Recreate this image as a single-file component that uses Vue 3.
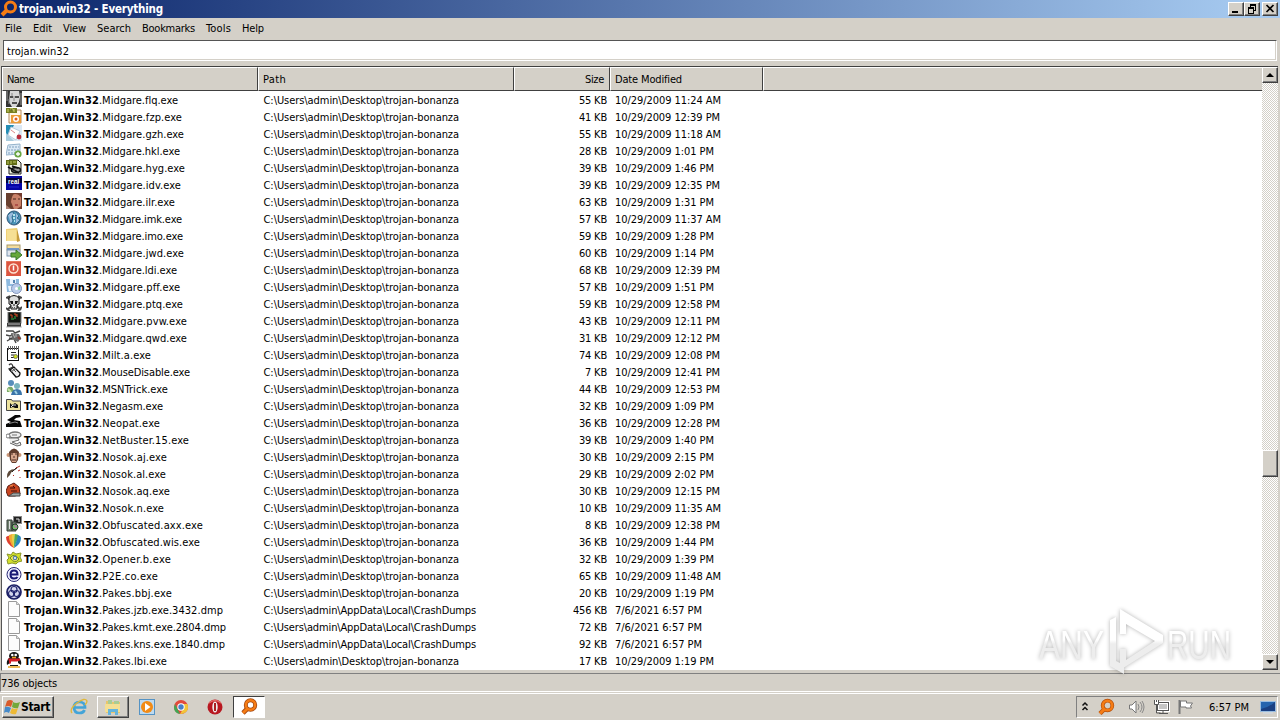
<script setup>
// Tightens or loosens the tracking so a label takes exactly the given width.
const vFit = {
  mounted(el, { value }) {
    const w = el.getBoundingClientRect().width
    el.style.letterSpacing = (value - w) / el.textContent.length + 'px'
  }
}

const menu = [['File', 17, 11], ['Edit', 19, 11], ['View', 23, 11], ['Search', 34, 11], ['Bookmarks', 53, 11], ['Tools', 25, 11], ['Help', 22, 0]]

const page = '<path d="M2.5 .5h8l3 3v12h-11z" fill="#fcfcfc" stroke="#999"/><path d="M10.5 .5v3h3" fill="#ddd" stroke="#aaa"/>'
const icons = {
  face: '<rect width="16" height="16" fill="#343434"/><path d="M4 0h9l1 6-1 5-3 5H6L3 11z" fill="#d7d7d7"/><path d="M4 6h3M9 6h4M6 12h5" stroke="#222" stroke-width="1.5"/><path d="M8 5v5M6 2v3M3 8v5" stroke="#888"/><path d="M1 0v10M15 2v12" stroke="#999"/>',
  jpg: '<path d="M3 2h12v13H3z" fill="#fff7e9" stroke="#b4895b"/><rect x="5" y="7" width="10" height="8" fill="#ed9b37"/><circle cx="10" cy="11" r="3" fill="#fff"/><circle cx="10" cy="11" r="1.5" fill="#dd5b20"/><rect width="11" height="5" fill="#777f22"/><path d="M2 1v3M4 1h3v2M8 1v3" stroke="#d3d86a"/>',
  cards: '<rect width="16" height="16" fill="#dbe9f5"/><path d="M0 0h8L3 10H0z" fill="#258eb5"/><path d="M0 8l8 8H0z" fill="#acd"/><path d="M5 2l9 4-4 9L2 10z" fill="#fff" stroke="#bcd"/><circle cx="13" cy="12" r="2.4" fill="#b92d3c"/><path d="M5 5l4 3" stroke="#d88"/>',
  kbd: '<path d="M2 3l12-1v10L0 13z" fill="#dbe9f5" stroke="#94b2cb"/><path d="M3 5h10M2 8h11M2 11h9" stroke="#9db8d0" stroke-width="1.4" stroke-dasharray="2 1"/><circle cx="12" cy="12" r="3.6" fill="#69a643"/><path d="M12 10v4M10 12h4" stroke="#fff" stroke-width="1.3"/>',
  doc: '<path d="M3 1h9l3 3v11H3z" fill="#eef0df" stroke="#222"/><rect y="1" width="11" height="5" fill="#606b14"/><path d="M2 2v3M5 2v3M7 3h3" stroke="#c3cc68"/><ellipse cx="10" cy="11" rx="4.5" ry="2.5" fill="#999" stroke="#111" stroke-width="1.5"/><path d="M2 8l11 6M6 7l6 2" stroke="#111" stroke-width="1.5"/>',
  real: '<rect width="16" height="14" fill="#0505a5"/><path d="M0 2h16v5H0z" fill="#020238"/><text x="2" y="7.6" font-family="Liberation Sans" font-size="6.3" font-weight="bold" fill="#fff">real</text><path d="M3 11h10" stroke="#2222d0"/>',
  girl: '<rect width="16" height="16" fill="#733c2d"/><path d="M6 2q5-3 9 2v9l-4 3H8L5 9z" fill="#c98269"/><path d="M0 0h8L4 8l2 8H0z" fill="#69402f"/><path d="M7 6h3M12 6h2" stroke="#492820"/><path d="M9 12h3" stroke="#a33c3c" stroke-width="1.4"/><path d="M0 12l5 4H0z" fill="#ad8274"/>',
  globe: '<circle cx="8" cy="8" r="7" fill="#4a94b9" stroke="#355577"/><path d="M2 5q4-5 6-2l-2 4 1 4-2 3M10 2l3 4-2 2 3 2-4 4" fill="#9bd" stroke="#2f6d8c"/><path d="M7 5h2M7 8h2M8 11h1" stroke="#dff" stroke-width="1.5"/>',
  folder: '<path d="M0 2l11-1v13H0z" fill="#f1d177"/><path d="M11 1l3 13-3 1z" fill="#c59c3e"/><path d="M1 3h9v11H1z" fill="#f6df94"/>',
  move: '<rect x="1" y="1" width="13" height="5" fill="#f3dc9c" stroke="#a89868"/><rect x="1" y="6" width="13" height="6" fill="#e1e6ee" stroke="#7d95b0"/><path d="M1 5h12" stroke="#7397c4" stroke-width="2"/><path d="M5 9h5V6l6 5-6 5v-3H5z" fill="#66a83b" stroke="#37762a"/>',
  power: '<rect width="15" height="15" fill="#dc5541"/><path d="M0 14V0h15" fill="none" stroke="#ee9b7a"/><circle cx="7.5" cy="7.5" r="4.5" fill="none" stroke="#ffe4d2" stroke-width="1.4"/><path d="M7.5 4.5v5" stroke="#fff" stroke-width="1.5"/>',
  save: '<path d="M0 1h13v12l-12 1z" fill="#8ebadf"/><path d="M4 1h6v5H4zM2 8h8v5H3z" fill="#eaf3fd"/><path d="M8 2v3" stroke="#5383b0" stroke-width="2"/><circle cx="10.5" cy="10.5" r="5" fill="#b8cae9" stroke="#8193bb"/><path d="M10 11l4-3v4z" fill="#8bd0a0"/><circle cx="10.5" cy="10.5" r="1.5" fill="#fff"/>',
  skull: '<path d="M1 2l14 13M15 2L1 15M0 3l4-2M12 1l4 2M0 13l4 3M12 16l4-4" stroke="#444" stroke-width="1.8"/><path d="M3 3q5-5 10 0v6l-2 1v4H5v-4L3 9z" fill="#ddd" stroke="#111"/><path d="M4 6h3v3H5zM9 6h3l-1 3H9zM7.500 9h1v2h-1z" fill="#111"/><path d="M6 12.500h4" stroke="#555" stroke-dasharray="1 1"/>',
  pc: '<rect x="2" width="13" height="11" fill="#101510" stroke="#777"/><path d="M4 3h2v3M8 2h2v2M11 5V2" stroke="#d44e25" fill="none"/><path d="M5 7h3M9 4v3" stroke="#35b54c"/><path d="M1 11h14v4H1z" fill="#393939"/><path d="M2 12h12M0 15h16" stroke="#bbb"/>',
  bug: '<path d="M0 2h7l2 2 5-2M0 6l4 1 3-2M1 12l5-3M8 10l2 4M11 8l4 2M3 9l4 1" stroke="#444" fill="none" stroke-width="1.4"/><path d="M5 4l8 1 2 4-3 4-6-3z" fill="#666"/><path d="M7 5l2 4M10 5v3" stroke="#bbb"/><path d="M12 8l2 2" stroke="#873b33" stroke-width="2"/>',
  pad: '<rect x="1.500" y="2.500" width="11" height="12" fill="#fff" stroke="#111"/><path d="M2.500 0v4M4.500 0v4M6.500 0v4M8.500 0v4M10.500 0v4M12.500 0v4" stroke="#666"/><path d="M5 6.500h5M5 9h3M5 11.500h3" stroke="#222" stroke-width="1.2"/><circle cx="9.500" cy="10.500" r="2" fill="#d0e11b" stroke="#776"/>',
  mouse: '<path d="M3 2q3-3 4 2l-4 2 3 3" fill="none" stroke="#333" stroke-width="1.3"/><path d="M4 7l4-3 6 6q0 4-4 4z" fill="#eee" stroke="#111" stroke-width="1.3"/><path d="M5 9l5-4M7 6l3 3" stroke="#555"/>',
  msn: '<circle cx="5" cy="3" r="3" fill="#588ebb"/><path d="M1 12q-1-6 5-5l3 5z" fill="#78a867"/><circle cx="11" cy="6" r="3" fill="#79b4bd"/><path d="M5 15q1-6 6-6t5 6z" fill="#3b75aa"/><path d="M2 9l3 3" stroke="#cbe4a9" stroke-width="2"/><path d="M9 11l2 3" stroke="#9ed0e3" stroke-width="2"/>',
  fold2: '<path d="M.5 2.500h5l1 1.500h8v9.500H.5z" fill="#eee39d" stroke="#444"/><path d="M4 6l2 2 3-2 3 2v3H9l-2-1-3 1z" fill="#111"/><path d="M7 8h3M5 10l2-2" stroke="#eee"/>',
  spy: '<path d="M1 6l5-3 3-2h5l1 2-5 1-2 2 6 1 2 6H0v-3l5-2z" fill="#080808"/><path d="M3 9.500l6-1.500 3 1" stroke="#bbb" fill="none" stroke-width=".7"/>',
  robot: '<ellipse cx="9" cy="4" rx="6" ry="3" fill="#eee" stroke="#777" stroke-width="1.3"/><circle cx="2" cy="5" r="2" fill="#fff" stroke="#777"/><path d="M3 7h9l1 2-7 2 5 2 3-2 1 3-4 1-7-3" fill="#eee" stroke="#666"/><path d="M6 4h5" stroke="#777"/>',
  monkey: '<circle cx="2.5" cy="7" r="2" fill="#c99678"/><circle cx="13.5" cy="7" r="2" fill="#c99678"/><path d="M3 4q5-7 10 0l-1 8-2 3H6l-2-3z" fill="#603c2c"/><path d="M5 5h6v5l-1 4H6l-1-4z" fill="#d8a68c"/><path d="M5 6h2M9 6h2M7 9h2M6 12h4" stroke="#4a2a22"/>',
  swirl: '<path d="M1 13q-1-9 9-9-5 2-6 6z" fill="#5c4939"/><path d="M6 7l5-5M8 5l3-2" stroke="#312924"/><path d="M10 3l4-2M12 6l2-1M7 11l1-1M14 12v1" stroke="#b52c26"/>',
  red: '<path d="M2 4l6-3 5 4 1 7-5 2H2l-2-5z" fill="#c84520" stroke="#5f2015"/><path d="M4 6h5M5 9h6M7 4l2 2" stroke="#41100b"/><path d="M7 11h7v3H3z" fill="#9da8a8" stroke="#444"/><path d="M4 4l3-1" stroke="#ef8f48"/>',
  none: '',
  setup: '<rect x="7.500" y=".5" width="8" height="7" fill="#222" stroke="#888"/><path d="M10 3h3v3" stroke="#ddd" fill="none"/><path d="M1 4h5v11H1zM6 6h4v9H6z" fill="#738371" stroke="#363f39"/><circle cx="9" cy="11" r="3" fill="#73ba69" stroke="#26352d"/><path d="M11 8l4 2v4M3.500 5v8" stroke="#ddd" fill="none"/><path d="M8 10h2v2" stroke="#d252c4" fill="none"/>',
  leaf: '<path d="M8 15Q0 11 0 4q3-2 4-1z" fill="#df4030"/><path d="M8 15Q2 8 3 2l3-1z" fill="#f3a733"/><path d="M8 15Q5 6 6 1l3 0z" fill="#e7ce47"/><path d="M8 15Q8 5 9 1q3 0 4 2z" fill="#4eaa59"/><path d="M8 15Q11 7 12 2q3 1 3 3 0 6-7 10" fill="#2884bf"/>',
  opener: '<path d="M1 4l4 1 2-3 3 2 5-1-1 4 2 4-4 1-2 2-4-1-4 1-1-4 2-2z" fill="#d4e02b" stroke="#8b962b"/><path d="M4 8q4-6 9 1-4 6-9-1z" fill="#ede653" stroke="#6f8a26"/><circle cx="9" cy="8" r="2.2" fill="#547eaa"/><circle cx="9" cy="8" r="1" fill="#fff"/>',
  ee: '<circle cx="8" cy="7.500" r="7" fill="#eef" stroke="#272774" stroke-width="1"/><path d="M4.500 7.500h7q0-4-3.500-4t-3.500 4 3.500 4q2.500 0 3.500-1.500" fill="none" stroke="#171774" stroke-width="2"/>',
  knot: '<circle cx="8" cy="8" r="7" fill="#d4d7ee" stroke="#1c2065" stroke-width="1.7"/><circle cx="8" cy="5.500" r="3" fill="none" stroke="#20246d" stroke-width="1.2"/><circle cx="5.500" cy="9.500" r="3" fill="none" stroke="#20246d" stroke-width="1.2"/><circle cx="10.500" cy="9.500" r="3" fill="none" stroke="#20246d" stroke-width="1.2"/>',
  page,
  qq: '<ellipse cx="8" cy="4" rx="5" ry="4" fill="#161616"/><path d="M3 6Q0 9 1 13l3-2v3h8v-3l3 2q1-4-2-7z" fill="#171717"/><path d="M4 7h8v6H4z" fill="#fff"/><path d="M2 6.500h12v2l-3 1H5v2H3V9z" fill="#d21b25"/><circle cx="6.300" cy="3" r="1.300" fill="#fff"/><circle cx="9.700" cy="3" r="1.300" fill="#fff"/><path d="M6 5.500h4M2 15h12" stroke="#e9a520" stroke-width="1.300"/>'
}

// suffix, right edge, size, date, icon
const rows = [
  ['Midgare.flq.exe', 178, 55, '11:24 AM', 'face'], ['Midgare.fzp.exe', 182, 41, '12:39 PM', 'jpg'],
  ['Midgare.gzh.exe', 184, 55, '11:18 AM', 'cards'], ['Midgare.hkl.exe', 180, 28, '1:01 PM', 'kbd'],
  ['Midgare.hyg.exe', 185, 39, '1:46 PM', 'doc'], ['Midgare.idv.exe', 181, 39, '12:35 PM', 'real'],
  ['Midgare.ilr.exe', 175, 63, '1:31 PM', 'girl'], ['Midgare.imk.exe', 182, 57, '11:37 AM', 'globe'],
  ['Midgare.imo.exe', 183, 59, '1:28 PM', 'folder'], ['Midgare.jwd.exe', 184, 60, '1:14 PM', 'move'],
  ['Midgare.ldi.exe', 177, 68, '12:39 PM', 'power'], ['Midgare.pff.exe', 181, 57, '1:51 PM', 'save'],
  ['Midgare.ptq.exe', 183, 59, '12:58 PM', 'skull'], ['Midgare.pvw.exe', 187, 43, '12:11 PM', 'pc'],
  ['Midgare.qwd.exe', 187, 31, '12:12 PM', 'bug'], ['Milt.a.exe', 151, 74, '12:08 PM', 'pad'],
  ['MouseDisable.exe', 190, 7, '12:41 PM', 'mouse'], ['MSNTrick.exe', 168, 44, '12:53 PM', 'msn'],
  ['Negasm.exe', 163, 32, '1:09 PM', 'fold2'], ['Neopat.exe', 160, 36, '12:28 PM', 'spy'],
  ['NetBuster.15.exe', 189, 39, '1:40 PM', 'robot'], ['Nosok.aj.exe', 167, 30, '2:15 PM', 'monkey'],
  ['Nosok.al.exe', 166, 29, '2:02 PM', 'swirl'], ['Nosok.aq.exe', 170, 30, '12:15 PM', 'red'],
  ['Nosok.n.exe', 164, 10, '11:35 AM', 'none'], ['Obfuscated.axx.exe', 203, 8, '12:38 PM', 'setup'],
  ['Obfuscated.wis.exe', 200, 36, '1:44 PM', 'leaf'], ['Opener.b.exe', 171, 32, '1:39 PM', 'opener'],
  ['P2E.co.exe', 158, 65, '11:48 AM', 'ee'], ['Pakes.bbj.exe', 172, 20, '1:19 PM', 'knot'],
  ['Pakes.jzb.exe.3432.dmp', 223, 456, '', 'page'], ['Pakes.kmt.exe.2804.dmp', 226, 72, '', 'page'],
  ['Pakes.kns.exe.1840.dmp', 225, 92, '', 'page'], ['Pakes.lbi.exe', 167, 17, '1:19 PM', 'qq']
].map(([name, end, kb, time, icon]) => ({
  name: '.' + name, nameW: end - 99, size: kb + ' KB', sizeW: kb > 99 ? 34 : kb > 9 ? 28 : 22,
  path: time ? 'C:\\Users\\admin\\Desktop\\trojan-bonanza' : 'C:\\Users\\admin\\AppData\\Local\\CrashDumps',
  pathW: time ? 195.5 : 212.5,
  date: time ? '10/29/2009 ' + time : '7/6/2021 6:57 PM',
  dateW: !time ? 87 : time.length < 8 ? 99 : time.endsWith('AM') ? 106 : 105, icon
}))
</script>

<template>
  <div class="screen">
    <header class="title">
      <svg class="logo" width="18" height="18" viewBox="0 0 18 18"><circle cx="10.5" cy="7" r="5" fill="none" stroke="#f57c14" stroke-width="3" /><path d="M7 10l-5 5" stroke="#f57c14" stroke-width="4" /></svg>
      <b v-fit="144">trojan.win32 - Everything</b>
      <div class="wbtns">
        <i class="btn"><svg width="14" height="12"><path d="M3 9h6" stroke="#000" stroke-width="2" /></svg></i>
        <i class="btn"><svg width="14" height="12" shape-rendering="crispEdges"><path d="M5 1h6v2H5zM3 4h6v2H3z" /><path d="M5.5 2v2M10.5 2v5.500H9M3.500 5v5h5V5" fill="none" stroke="#000" /></svg></i>
        <i class="btn close"><svg width="14" height="12"><path d="M3.500 2l7 7M10.500 2l-7 7" stroke="#000" stroke-width="1.7" /></svg></i>
      </div>
    </header>
    <nav class="menu"><span v-for="m in menu" :key="m[0]" :style="{ marginRight: m[2] + 'px', width: m[1] + 'px' }"><span v-fit="m[1]">{{ m[0] }}</span></span></nav>
    <div class="search"><span v-fit="62">trojan.win32</span></div>
    <main class="list">
      <div class="content">
        <div class="head">
          <div class="h c1"><span v-fit="27">Name</span></div>
          <div class="h c2"><span v-fit="23">Path</span></div>
          <div class="h c3"><span v-fit="19">Size</span></div>
          <div class="h c4"><span v-fit="67">Date Modified</span></div>
          <div class="h c5"></div>
        </div>
        <div class="rows">
          <div v-for="r in rows" :key="r.name" class="row">
            <div class="name"><svg width="16" height="16" viewBox="0 0 16 16" v-html="icons[r.icon]"></svg><b v-fit="75">Trojan.Win32</b><span v-fit="r.nameW">{{ r.name }}</span></div>
            <div class="path"><span v-fit="r.pathW">{{ r.path }}</span></div>
            <div class="size"><span v-fit="r.sizeW">{{ r.size }}</span></div>
            <div class="date"><span v-fit="r.dateW">{{ r.date }}</span></div>
          </div>
        </div>
      </div>
      <div class="scroll">
        <i class="btn sb"><svg width="12" height="12"><path d="M2 8h8L6 4z" /></svg></i>
        <i class="btn thumb"></i>
        <i class="btn sb"><svg width="12" height="12"><path d="M2 4h8L6 8z" /></svg></i>
      </div>
    </main>
    <div class="status"><span v-fit="56">736 objects</span></div>
    <footer class="task">
      <div class="btn start">
        <svg width="17" height="16" viewBox="0 0 17 16"><path d="M3 2q3-2 6 0L7 8Q4 6 1 8z" fill="#d95b2b" /><path d="M9 3q3 2 7 0l-2 6q-3 1-6-1z" fill="#73a83b" /><path d="M1 8q3-1 6 1l-2 5q-3-2-5 0z" fill="#468ac9" /><path d="M8 9q3 2 6 0l-2 6q-3 1-6-1z" fill="#edb935" /></svg>
        <b v-fit="29">Start</b>
      </div>
      <div class="tb"><svg width="18" height="18" viewBox="0 0 18 18"><path d="M4 9.500h11Q15 4 9.500 4T4 9.500 9.500 15q4 0 5-3" fill="none" stroke="#43a4d8" stroke-width="2.700" /><path d="M2 15Q-1 11 7 5t10-2q0 2-2 4" fill="none" stroke="#e0b83c" stroke-width="1.400" /></svg></div>
      <div class="tb btn"><svg width="18" height="18" viewBox="0 0 18 18"><path d="M2 3h5l1 1h8v11H2z" fill="#e8c66b" /><path d="M4 2h4v5H4zM10 3h5v4h-5z" fill="#a9cc94" /><path d="M1 6h15v8H1z" fill="#f4df94" /><path d="M4 17v-6h10v6h-3v-3H7v3z" fill="#65b4dc" /></svg></div>
      <div class="tb"><svg width="18" height="18" viewBox="0 0 18 18"><rect x="1.500" y="1.500" width="15" height="15" fill="#bedaf0" stroke="#5593c4" /><circle cx="9" cy="9" r="6" fill="#f28b16" /><path d="M7 5l5.500 4L7 13z" fill="#fff" /></svg></div>
      <div class="tb"><svg width="18" height="18" viewBox="0 0 18 18"><circle cx="9" cy="9" r="7" fill="#e14a3b" /><path d="M3 6l5 10Q2 15 2 9z" fill="#42a554" /><path d="M9 6h6.500Q18 15 8 16l3-5z" fill="#f2c539" /><circle cx="9" cy="9" r="3.700" fill="#fff" /><circle cx="9" cy="9" r="2.700" fill="#477fc8" /></svg></div>
      <div class="tb"><svg width="18" height="18" viewBox="0 0 18 18"><ellipse cx="9" cy="9" rx="7.500" ry="7.500" fill="#b81821" /><path d="M3 5q6-5 12 0" fill="none" stroke="#e56c68" stroke-width="1.500" /><ellipse cx="9" cy="9" rx="2.700" ry="5.500" fill="#eee" /><path d="M9 5v8" stroke="#a22" stroke-width="2" /></svg></div>
      <div class="tb active"><svg width="18" height="18" viewBox="0 0 18 18"><path d="M8 10l-5 5" stroke="#a54912" stroke-width="4.600" /><circle cx="10.500" cy="7" r="4.700" fill="#fff" stroke="#a54912" stroke-width="4" /><circle cx="10.500" cy="7" r="4.700" fill="none" stroke="#f57c14" stroke-width="2.400" /><path d="M8 10l-5 5" stroke="#f57c14" stroke-width="2.800" /></svg></div>
      <div class="tray">
        <svg class="t1" width="8" height="12"><path d="M1.500 4.500l2.500-2.500 2.500 2.500M1.500 9l2.500-2.500 2.500 2.500" fill="none" stroke="#111" stroke-width="1.500" /></svg>
        <svg class="t2" width="18" height="18" viewBox="0 0 18 18"><circle cx="10.500" cy="7.500" r="4.800" fill="none" stroke="#b5500c" stroke-width="3.800" /><path d="M8 10.500l-5 5" stroke="#b5500c" stroke-width="4.500" /><circle cx="10.500" cy="7.500" r="4.800" fill="none" stroke="#f57c14" stroke-width="2.400" /><path d="M8 10.500l-5 5" stroke="#f57c14" stroke-width="3" /></svg>
        <svg class="t3" width="18" height="16"><path d="M1.500 6h2.500l4-4v12l-4-4H1.500z" fill="#fff" stroke="#777" /><path d="M10 5q2 3 0 6M12 3q4 5 0 10M14 2q4 6 0 12" fill="none" stroke="#888" /></svg>
        <svg class="t4" width="17" height="16"><rect x="4.500" y="3.500" width="11" height="8" fill="#c5c5c5" stroke="#fff" stroke-width="3" /><rect x="4.500" y="3.500" width="11" height="8" fill="none" stroke="#555" /><path d="M6 14.500h9M10 12v2M3.500 6v8h4" fill="none" stroke="#555" /><path d="M1.500 1v4.500h4V1M3.500 1v2" fill="#fff" stroke="#555" /></svg>
        <svg class="t5" width="17" height="16"><path d="M2.500 1v14" stroke="#777" stroke-width="2" /><path d="M3.500 2h6v2h6l-2 3 1 2H9V8H3.500z" fill="#fff" stroke="#777" /></svg>
        <span v-fit="40" class="clock">6:57 PM</span>
        <svg class="t6" width="16" height="14"><rect x=".5" y="1.500" width="15" height="10" fill="#2564ae" stroke="#9abde0" /><path d="M1 9q7-1 14-7v9H1z" fill="#1a4082" /><path d="M3 13h10" stroke="#cfdcea" /></svg>
      </div>
    </footer>
    <svg class="mark" width="216" height="80" viewBox="0 0 216 80">
      <defs>
        <linearGradient id="fade" gradientUnits="userSpaceOnUse" x1="0" y1="34" x2="0" y2="38"><stop offset="0" stop-color="#fff" /><stop offset="1" stop-color="#ededed" /></linearGradient>
      </defs>
      <g class="glow" fill="url(#fade)">
        <text x="5" y="53" textLength="65" lengthAdjust="spacingAndGlyphs">ANY</text>
        <text x="133" y="53" textLength="64" lengthAdjust="spacingAndGlyphs">RUN</text>
        <path d="M76 14l6-3v44l8 4v9l-14-8z" />
        <path fill-rule="evenodd" d="M86 3l43 26v8L86 64V43h6v11l29-19-29-17v10h-6z" />
      </g>
    </svg>
  </div>
</template>

<style>
body { background: #d4d0c8; overflow: hidden; }
</style>
<style scoped>
.screen { position: relative; width: 1280px; height: 720px; display: flex; flex-direction: column; background: #d4d0c8; color: #000; font-family: "DejaVu Sans Condensed", "DejaVu Sans", sans-serif; font-stretch: condensed; font-size: 11px; line-height: 17px; white-space: pre; overflow: hidden; }
svg { display: block; flex: none; }
span, b { display: inline-block; flex: none; }
.title { height: 18px; display: flex; align-items: center; background: linear-gradient(90deg, #0a246a, #a6caf0 98%); color: #fff; font-size: 11.500px; }
.logo { margin-right: 1px; }
.wbtns { display: flex; margin: 0 2px 0 auto; }
.btn { display: block; box-sizing: border-box; background: #d4d0c8; border: 1px solid; border-color: #fff #404040 #404040 #fff; box-shadow: inset -1px -1px #808080; }
.wbtns .btn { width: 16px; height: 14px; }
.wbtns .close { margin-left: 2px; }
.menu { display: flex; height: 22px; align-items: center; padding-left: 5px; box-sizing: border-box; padding-bottom: 2px; }
.search { height: 21px; margin: 0 3px; box-sizing: border-box; background: #fff; border: 1px solid; border-color: #555 #fff #fff #555; box-shadow: inset 0 -1px #d4d0c8, inset -1px 0 #d4d0c8; padding: 2px 3px 0; }
.list { margin: 5px 2px 0 1px; height: 605px; box-sizing: border-box; display: flex; border-top: 1px solid #404040; border-left: 1px solid #555; border-bottom: 1px solid #d4d0c8; background: #fff; }
.content { flex: 1; overflow: hidden; }
.head { display: flex; height: 24px; }
.h { box-sizing: border-box; height: 24px; padding: 3px 5px 0; background: #d4d0c8; border: 1px solid; border-color: #fff #404040 #404040 #fff; border-left-color: #fff; }
.c1 { width: 256px; padding-left: 4px; }
.c2 { width: 256px; padding-left: 4px; }
.c3 { width: 96px; text-align: right; }
.c4 { width: 153px; padding-left: 4px; }
.c5 { flex: 1; border-right: 0; }
.row { display: flex; height: 17px; }
.row span, .row b { padding-top: 1px; height: 16px; }
.name { width: 257px; box-sizing: border-box; display: flex; padding-left: 4px; }
.name svg { margin-right: 2px; }
.path { width: 256px; box-sizing: border-box; padding-left: 4.500px; }
.size { width: 92px; text-align: right; }
.date { padding-left: 8px; }
.scroll { width: 16px; display: flex; flex-direction: column; background: repeating-conic-gradient(#d4d0c8 0 25%, #fff 0 50%) 0 0 / 2px 2px; }
.sb { width: 16px; height: 16px; padding: 1px; }
.thumb { width: 16px; height: 27px; margin: 367px 0 auto; }
.status { height: 19px; margin-top: 2px; box-sizing: border-box; border-top: 1px solid #808080; border-left: 1px solid #808080; border-bottom: 1px solid #fff; padding: 1px 0 0; }
.task { flex: 1; display: flex; margin-top: 1px; border-top: 1px solid #fff; padding: 2px 2px 0; box-sizing: border-box; align-items: flex-start; }
.start { display: flex; width: 52px; height: 22px; align-items: center; padding-left: 1px; font-size: 12px; margin-right: 9px; }
.tb { width: 32px; height: 22px; box-sizing: border-box; margin-right: 2px; display: flex; align-items: center; justify-content: center; }
.tb.active { background: #fff; border: 1px solid; border-color: #404040 #fff #fff #404040; }
.tray { margin-left: auto; width: 202px; height: 22px; box-sizing: border-box; border: 1px solid; border-color: #808080 #fff #fff #808080; display: flex; align-items: center; padding-left: 4px; }
.t2 { margin-left: 8px; }
.t3 { margin-left: 13px; }
.t4 { margin-left: 7px; }
.t5 { margin-left: 7px; }
.clock { margin-left: 15px; }
.t6 { margin-left: 11px; }
.mark { position: absolute; left: 1034px; top: 606px; }
.mark text { font: 41px "Liberation Sans", sans-serif; }
.glow { filter: drop-shadow(0 0 2px rgba(0, 0, 0, .3)); }
</style>
